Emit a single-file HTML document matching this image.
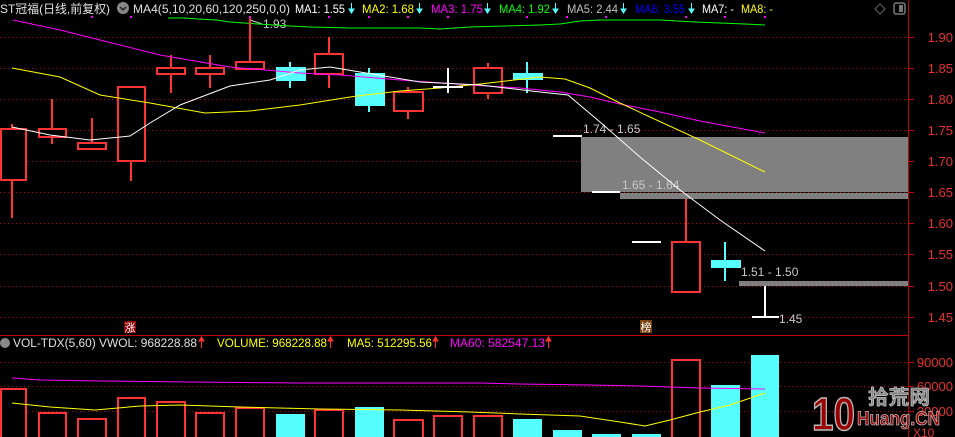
<!DOCTYPE html>
<html><head><meta charset="utf-8"><style>
html,body{margin:0;padding:0;background:#000;width:955px;height:437px;overflow:hidden}
svg{display:block}
text{font-family:"Liberation Sans","Noto Sans CJK SC",sans-serif}
</style></head><body>
<svg width="955" height="437" viewBox="0 0 955 437" xmlns="http://www.w3.org/2000/svg">
<rect width="955" height="437" fill="#000"/>
<g stroke="#c00000" stroke-width="1" stroke-dasharray="1,3">
<line x1="0" y1="37.5" x2="908" y2="37.5"/>
<line x1="0" y1="68.5" x2="908" y2="68.5"/>
<line x1="0" y1="99.5" x2="908" y2="99.5"/>
<line x1="0" y1="130.5" x2="908" y2="130.5"/>
<line x1="0" y1="161.5" x2="908" y2="161.5"/>
<line x1="0" y1="192.5" x2="908" y2="192.5"/>
<line x1="0" y1="223.5" x2="908" y2="223.5"/>
<line x1="0" y1="254.5" x2="908" y2="254.5"/>
<line x1="0" y1="286.5" x2="908" y2="286.5"/>
<line x1="0" y1="317.5" x2="908" y2="317.5"/>
<line x1="0" y1="362.5" x2="908" y2="362.5"/>
<line x1="0" y1="386.5" x2="908" y2="386.5"/>
<line x1="0" y1="411.5" x2="908" y2="411.5"/>
</g>
<line x1="908.5" y1="0" x2="908.5" y2="437" stroke="#c00000"/>
<line x1="0" y1="335.5" x2="908" y2="335.5" stroke="#c00000"/>
<g stroke="#c00000">
<line x1="908" y1="37.5" x2="914" y2="37.5"/><line x1="908" y1="68.5" x2="914" y2="68.5"/><line x1="908" y1="99.5" x2="914" y2="99.5"/><line x1="908" y1="130.5" x2="914" y2="130.5"/><line x1="908" y1="161.5" x2="914" y2="161.5"/><line x1="908" y1="192.5" x2="914" y2="192.5"/><line x1="908" y1="223.5" x2="914" y2="223.5"/><line x1="908" y1="254.5" x2="914" y2="254.5"/><line x1="908" y1="286.5" x2="914" y2="286.5"/><line x1="908" y1="317.5" x2="914" y2="317.5"/>
<line x1="908" y1="362.5" x2="914" y2="362.5"/><line x1="908" y1="386.5" x2="914" y2="386.5"/><line x1="908" y1="411.5" x2="914" y2="411.5"/>
</g>
<g fill="#e83030" font-size="13">
<text x="953" y="42" text-anchor="end">1.90</text>
<text x="953" y="73" text-anchor="end">1.85</text>
<text x="953" y="104" text-anchor="end">1.80</text>
<text x="953" y="135" text-anchor="end">1.75</text>
<text x="953" y="166" text-anchor="end">1.70</text>
<text x="953" y="197" text-anchor="end">1.65</text>
<text x="953" y="228" text-anchor="end">1.60</text>
<text x="953" y="259" text-anchor="end">1.55</text>
<text x="953" y="291" text-anchor="end">1.50</text>
<text x="953" y="322" text-anchor="end">1.45</text>
<text x="953" y="367" text-anchor="end">90000</text>
<text x="953" y="391" text-anchor="end">60000</text>
<text x="953" y="416" text-anchor="end">30000</text>
<text x="913" y="437" font-size="12">X10</text>
</g>
<rect x="581" y="137" width="327" height="55" fill="#808080"/>
<rect x="620" y="193" width="288" height="6" fill="#808080"/>
<rect x="739" y="281" width="169" height="5" fill="#808080"/>
<g fill="#c8c8c8" font-size="12">
<text x="583" y="133">1.74 - 1.65</text>
<text x="622" y="189">1.65 - 1.64</text>
<text x="741" y="276">1.51 - 1.50</text>
<text x="779" y="323">1.45</text>
<text x="263" y="28">1.93</text>
</g>
<line x1="250" y1="20" x2="262" y2="24" stroke="#c8c8c8"/>
<polyline fill="none" stroke="#00ff00" stroke-width="1" points="168,18 185,18 198,19 216,20 230,22 258,24 290,26 310,27 350,28 390,28 420,28 440,29 470,27 540,25 560,24 580,21 600,20 640,20 660,20 695,22 720,23 745,24 765,25"/>
<g fill="none" stroke="#ff3333" stroke-width="2">
<line x1="12" y1="124" x2="12" y2="218"/><rect x="1" y="129" width="25" height="51" fill="#000"/>
<line x1="52" y1="99" x2="52" y2="144"/><rect x="39" y="129" width="27" height="8" fill="#000"/>
<line x1="92" y1="118" x2="92" y2="143"/><rect x="78" y="143" width="28" height="6" fill="#000"/>
<line x1="131" y1="161" x2="131" y2="181"/><rect x="118" y="87" width="27" height="74" fill="#000"/>
<line x1="171" y1="55" x2="171" y2="93"/><rect x="157" y="68" width="28" height="6" fill="#000"/>
<line x1="210" y1="55" x2="210" y2="88"/><rect x="196" y="68" width="28" height="6" fill="#000"/>
<line x1="250" y1="16" x2="250" y2="62"/><rect x="236" y="62" width="28" height="7" fill="#000"/>
<line x1="329" y1="37" x2="329" y2="88"/><rect x="315" y="54" width="28" height="20" fill="#000"/>
<line x1="408" y1="87" x2="408" y2="119"/><rect x="394" y="92" width="29" height="19" fill="#000"/>
<line x1="488" y1="63" x2="488" y2="99"/><rect x="474" y="68" width="28" height="25" fill="#000"/>
<line x1="686" y1="199" x2="686" y2="242"/><rect x="672" y="242" width="28" height="50" fill="#000"/>
</g>
<g fill="#55ffff" stroke="#55ffff" stroke-width="2">
<line x1="290" y1="62" x2="290" y2="88"/><rect x="277" y="68" width="28" height="12"/>
<line x1="369" y1="68" x2="369" y2="112"/><rect x="356" y="74" width="28" height="31"/>
<line x1="527" y1="62" x2="527" y2="93"/><rect x="514" y="74" width="28" height="5"/>
<line x1="725" y1="242" x2="725" y2="281"/><rect x="712" y="261" width="28" height="6"/>
</g>
<polyline fill="none" stroke="#ff00ff" stroke-width="1" points="13,20 60,30 100,40 160,55 230,67 300,73 340,75 400,80 470,85 520,88 560,92 590,97 620,104 660,112 700,121 765,133"/>
<polyline fill="none" stroke="#ffff00" stroke-width="1" points="12,68 60,77 100,95 150,103 205,113 250,111 300,105 350,97 400,91 440,88 480,84 540,77 565,79 590,88 620,103 650,117 700,140 765,172"/>
<polyline fill="none" stroke="#ffffff" stroke-width="1" points="12,127 50,135 90,140 130,136 150,123 180,105 230,86 270,80 300,70 330,67 360,72 420,82 480,85 540,92 568,95 600,122 640,157 680,190 720,220 765,251"/>
<g stroke="#ffffff" stroke-width="2">
<line x1="448" y1="68" x2="448" y2="93"/><line x1="433" y1="87" x2="463" y2="87"/>
<line x1="553" y1="136" x2="582" y2="136"/>
<line x1="592" y1="192" x2="620" y2="192"/>
<line x1="632" y1="242" x2="661" y2="242"/>
<line x1="765" y1="286" x2="765" y2="317"/><line x1="752" y1="317" x2="779" y2="317"/>
</g>
<rect x="124" y="321" width="12" height="12" fill="#8b0000"/>
<text x="124.5" y="331.5" font-size="11" fill="#fff">涨</text>
<rect x="640" y="320" width="12" height="13" fill="#7a4010"/>
<text x="640.5" y="331" font-size="11" fill="#fff">榜</text>
<g fill="#000" stroke="#ff3333" stroke-width="2">
<rect x="1" y="389" width="25" height="50"/>
<rect x="39" y="413" width="27" height="30"/>
<rect x="78" y="419" width="28" height="30"/>
<rect x="118" y="398" width="27" height="45"/>
<rect x="157" y="402" width="28" height="45"/>
<rect x="196" y="413" width="28" height="30"/>
<rect x="236" y="408" width="28" height="35"/>
<rect x="315" y="410" width="28" height="35"/>
<rect x="394" y="420" width="29" height="25"/>
<rect x="434" y="416" width="28" height="25"/>
<rect x="474" y="416" width="28" height="25"/>
<rect x="672" y="360" width="28" height="85"/>
</g>
<g fill="#55ffff">
<rect x="276" y="414" width="29" height="23"/>
<rect x="355" y="407" width="29" height="30"/>
<rect x="513" y="419" width="29" height="18"/>
<rect x="553" y="430" width="29" height="7"/>
<rect x="592" y="434" width="29" height="3"/>
<rect x="632" y="434" width="29" height="3"/>
<rect x="711" y="385" width="29" height="52"/>
<rect x="751" y="355" width="28" height="82"/>
</g>
<polyline fill="none" stroke="#ff00ff" points="12,378 40,380 100,381 190,382 300,383 420,383 480,383 520,384 590,385 640,386 700,388 765,389"/>
<polyline fill="none" stroke="#ffff00" points="12,403 50,407 95,410 140,406 180,405 240,407 320,409 400,410 470,412 520,414 580,416 620,422 645,426 670,420 700,412 730,405 765,393"/>
<g font-weight="bold">
<text x="812" y="430" font-size="46" fill="#990000" stroke="#bbbbbb" stroke-width="1.5" textLength="43" lengthAdjust="spacingAndGlyphs">10</text>
<text x="868" y="404" font-size="20" fill="#888" stroke="#ccc" stroke-width="0.6" font-family="Noto Sans CJK SC,sans-serif" textLength="62" lengthAdjust="spacingAndGlyphs">拾荒网</text>
<text x="857" y="425" font-size="19" fill="#990000" stroke="#bbb" stroke-width="0.8" textLength="83" lengthAdjust="spacingAndGlyphs">Huang.CN</text>
</g>
<g font-size="12">
<text x="0" y="13" fill="#e0e0e0" textLength="110" lengthAdjust="spacingAndGlyphs">ST冠福(日线,前复权)</text>
<circle cx="123" cy="8" r="6" fill="#888"/>
<path d="M120 7 L123 10 L126 7" stroke="#222" fill="none" stroke-width="1.5"/>
<text x="133" y="13" fill="#e0e0e0" textLength="157" lengthAdjust="spacingAndGlyphs">MA4(5,10,20,60,120,250,0,0)</text>
<text x="295" y="13" fill="#fff" textLength="50" lengthAdjust="spacingAndGlyphs">MA1: 1.55</text>
<text x="362" y="13" fill="#ffff00" textLength="52" lengthAdjust="spacingAndGlyphs">MA2: 1.68</text>
<text x="431" y="13" fill="#ff00ff" textLength="52" lengthAdjust="spacingAndGlyphs">MA3: 1.75</text>
<text x="499" y="13" fill="#00ff00" textLength="51" lengthAdjust="spacingAndGlyphs">MA4: 1.92</text>
<text x="567" y="13" fill="#c0c0c0" textLength="51" lengthAdjust="spacingAndGlyphs">MA5: 2.44</text>
<text x="635" y="13" fill="#0000ff" textLength="50" lengthAdjust="spacingAndGlyphs">MA6: 3.55</text>
<text x="702" y="13" fill="#fff" textLength="32" lengthAdjust="spacingAndGlyphs">MA7: -</text>
<text x="741" y="13" fill="#ffff00" textLength="32" lengthAdjust="spacingAndGlyphs">MA8: -</text>
</g>
<g stroke="#55ffff" stroke-width="1" fill="#55ffff">
<line x1="351.5" y1="3" x2="351.5" y2="12"/><path d="M349 9 L354 9 L351.5 13Z"/>
<line x1="419.5" y1="3" x2="419.5" y2="12"/><path d="M417 9 L422 9 L419.5 13Z"/>
<line x1="487.5" y1="3" x2="487.5" y2="12"/><path d="M485 9 L490 9 L487.5 13Z"/>
<line x1="555.5" y1="3" x2="555.5" y2="12"/><path d="M553 9 L558 9 L555.5 13Z"/>
<line x1="623.5" y1="3" x2="623.5" y2="12"/><path d="M621 9 L626 9 L623.5 13Z"/>
<line x1="691.5" y1="3" x2="691.5" y2="12"/><path d="M689 9 L694 9 L691.5 13Z"/>
</g>
<g fill="#ff00ff">
<rect x="91" y="16" width="2" height="2"/><rect x="130" y="16" width="2" height="2"/><rect x="249" y="16" width="2" height="2"/><rect x="328" y="16" width="2" height="2"/><rect x="368" y="16" width="2" height="2"/><rect x="407" y="16" width="2" height="2"/><rect x="447" y="16" width="2" height="2"/><rect x="526" y="16" width="2" height="2"/><rect x="566" y="16" width="2" height="2"/><rect x="605" y="16" width="2" height="2"/><rect x="685" y="16" width="2" height="2"/><rect x="724" y="16" width="2" height="2"/><rect x="764" y="16" width="2" height="2"/>
</g>
<path d="M880 4 L885 9 L880 14 L875 9Z" fill="none" stroke="#666"/>
<rect x="894" y="3" width="11" height="11" rx="2" fill="none" stroke="#777" stroke-width="1.5"/>
<rect x="899" y="5" width="4" height="7" fill="#777"/>
<circle cx="5" cy="343" r="5" fill="#888"/>
<g font-size="11.5">
<text x="13" y="347" fill="#e0e0e0" textLength="184" lengthAdjust="spacingAndGlyphs">VOL-TDX(5,60) VWOL: 968228.88</text>
<text x="217" y="347" fill="#ffff00" textLength="110" lengthAdjust="spacingAndGlyphs">VOLUME: 968228.88</text>
<text x="347" y="347" fill="#ffff00" textLength="85" lengthAdjust="spacingAndGlyphs">MA5: 512295.56</text>
<text x="450" y="347" fill="#ff00ff" textLength="95" lengthAdjust="spacingAndGlyphs">MA60: 582547.13</text>
</g>
<g stroke="#ff3030" fill="#ff3030">
<line x1="201.5" y1="338" x2="201.5" y2="348"/><path d="M199 341 L204 341 L201.5 337Z"/>
<line x1="330.5" y1="338" x2="330.5" y2="348"/><path d="M328 341 L333 341 L330.5 337Z"/>
<line x1="435.5" y1="338" x2="435.5" y2="348"/><path d="M433 341 L438 341 L435.5 337Z"/>
<line x1="548.5" y1="338" x2="548.5" y2="348"/><path d="M546 341 L551 341 L548.5 337Z"/>
</g>
</svg>
</body></html>
